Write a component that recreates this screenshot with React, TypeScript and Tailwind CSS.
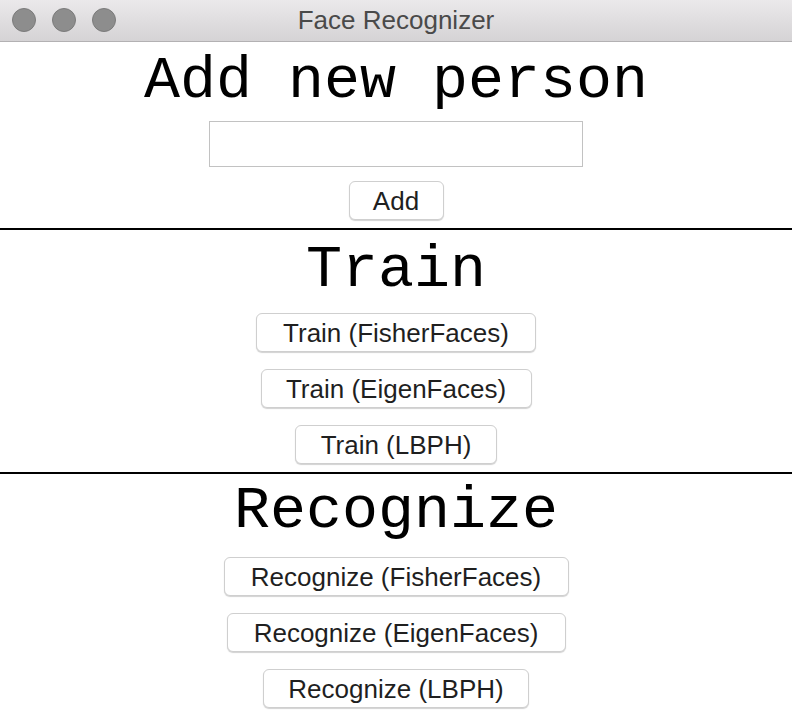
import React from "react"

const sans = { fontFamily: '"Liberation Sans", Arial, sans-serif' }

function Btn({ label, w }: { label: string; w: string }) {
  return (
    <button
      className={`${w} h-[39px] rounded-[6px] border border-[#cfcfcf] bg-white text-[26px] leading-none text-[#1f1f1f] shadow-[0_1px_1px_rgba(0,0,0,0.18)]`}
      style={sans}
    >
      {label}
    </button>
  )
}

function Heading({ children, mt }: { children: string; mt: string }) {
  return (
    <h1
      className={`${mt} text-[60px] leading-[60px] text-black`}
      style={{ fontFamily: '"Liberation Mono", "Courier New", monospace' }}
    >
      {children}
    </h1>
  )
}

export default function App() {
  return (
    <div className="w-[792px] h-[716px] overflow-hidden bg-white">
      {/* title bar */}
      <div className="relative h-[42px] border-b border-[#b3b1b3] bg-gradient-to-b from-[#ebe9eb] to-[#d5d3d5] flex items-center justify-center">
        <div className="absolute left-[12px] top-[8px] flex gap-[16px]">
          <span className="w-[24px] h-[24px] rounded-full bg-[#8d8d8d] border border-[#7b7b7b]" />
          <span className="w-[24px] h-[24px] rounded-full bg-[#8d8d8d] border border-[#7b7b7b]" />
          <span className="w-[24px] h-[24px] rounded-full bg-[#8d8d8d] border border-[#7b7b7b]" />
        </div>
        <span className="text-[26px] text-[#4a4a4a] -mt-[1px]" style={sans}>
          Face Recognizer
        </span>
      </div>

      {/* add person */}
      <section className="flex flex-col items-center">
        <Heading mt="mt-[9px]">Add new person</Heading>
        <input className="mt-[10px] w-[374px] h-[46px] border border-[#c2c2c2] outline-none" />
        <div className="mt-[14px]">
          <Btn label="Add" w="w-[95px]" />
        </div>
      </section>
      <div className="mt-[8px] h-[2px] bg-black" />

      {/* train */}
      <section className="flex flex-col items-center">
        <Heading mt="mt-[10px]">Train</Heading>
        <div className="mt-[13px] flex flex-col items-center gap-[17px]">
          <Btn label="Train (FisherFaces)" w="w-[280px]" />
          <Btn label="Train (EigenFaces)" w="w-[271px]" />
          <Btn label="Train (LBPH)" w="w-[202px]" />
        </div>
      </section>
      <div className="mt-[8px] h-[2px] bg-black" />

      {/* recognize */}
      <section className="flex flex-col items-center">
        <Heading mt="mt-[7px]">Recognize</Heading>
        <div className="mt-[16px] flex flex-col items-center gap-[17px]">
          <Btn label="Recognize (FisherFaces)" w="w-[345px]" />
          <Btn label="Recognize (EigenFaces)" w="w-[339px]" />
          <Btn label="Recognize (LBPH)" w="w-[266px]" />
        </div>
      </section>
    </div>
  )
}
